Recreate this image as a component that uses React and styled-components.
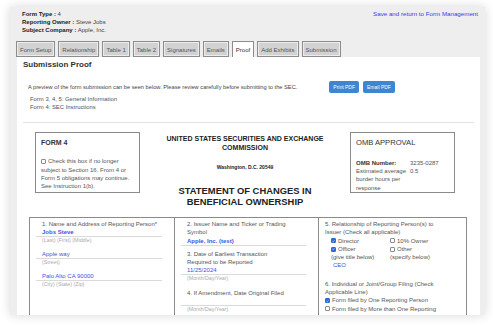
import React from "react";
import styled, { createGlobalStyle } from "styled-components";

const GlobalStyle = createGlobalStyle`
  html, body {
    margin: 0;
    padding: 0;
    background: #ffffff;
  }
  body {
    font-family: "Liberation Sans", Arial, sans-serif;
    color: #333;
  }
`;

const Page = styled.div`
  width: 493px;
  height: 325px;
  padding: 7px 8px 0 10px;
  box-sizing: border-box;
  overflow: hidden;
`;

const Card = styled.div`
  width: 475px;
  height: 308px;
  background: #eeeeee;
  box-shadow: 0 0 10px rgba(0, 0, 0, 0.16);
  display: flex;
  flex-flow: column;
  overflow: hidden;
`;

const Header = styled.div`
  flex-shrink: 0;
  height: 34px;
  display: flex;
  justify-content: space-between;
  padding: 3px 7px 0 12px;
  box-sizing: border-box;
`;

const Meta = styled.div`
  font-size: 6px;
  line-height: 8px;
  color: #444;

  b {
    color: #222;
  }
`;

const BackLink = styled.a`
  font-size: 6.2px;
  line-height: 8px;
  color: #3a3af0;
  text-decoration: none;
`;

const Tabs = styled.div`
  flex-shrink: 0;
  display: flex;
  gap: 3px;
  padding-left: 6px;
  height: 16px;
`;

const Tab = styled.div`
  font-size: 6px;
  color: ${p => (p.active ? "#333" : "#555")};
  padding: 1px 3px 0;
  display: flex;
  align-items: center;
  border: 1px solid #8c8c8c;
  border-bottom: ${p => (p.active ? "none" : "1px solid #8c8c8c")};
  background: ${p => (p.active ? "#ffffff" : "#d2d2d2")};
  box-shadow: ${p => (p.active ? "none" : "inset 0 0 0 1px #ececec")};
  box-sizing: border-box;
`;

const Panel = styled.div`
  flex: 1;
  min-height: 0;
  background: #ffffff;
  margin: 0 5px 0 7px;
  padding: 3px 6px 0;
`;

const Title = styled.div`
  font-size: 8px;
  font-weight: bold;
  color: #333;
  line-height: 10px;
`;

const PreviewRow = styled.div`
  display: flex;
  align-items: center;
  gap: 32px;
  margin-top: 11px;
  padding-left: 5px;
`;

const Note = styled.div`
  font-size: 5.7px;
  color: #444;
  white-space: nowrap;
`;

const Buttons = styled.div`
  display: flex;
  gap: 4px;
`;

const Button = styled.button`
  font-family: inherit;
  font-size: 5px;
  color: #fff;
  background: #3d86d2;
  border: none;
  border-radius: 2px;
  height: 12px;
  padding: 0 4px;
`;

const Links = styled.div`
  margin-top: 3px;
  padding-left: 7px;
  font-size: 5.9px;
  line-height: 7.5px;
  color: #555;
`;

const Separator = styled.div`
  height: 1px;
  background: #e2e2e2;
  margin-top: 11px;
`;

const FormTop = styled.div`
  display: grid;
  grid-template-columns: 105px 1fr 105px;
  align-items: start;
  padding: 0 19px 0 12px;
  margin-top: 9px;
`;

const Box = styled.div`
  border: 1px solid #8a8a8a;
  height: 61px;
  box-sizing: border-box;
  padding: 5px 5px 0;
  font-size: 6px;
  color: #555;
`;

const BoxTitle = styled.div`
  font-size: ${p => (p.bold ? "7px" : "7.6px")};
  font-weight: ${p => (p.bold ? "bold" : "normal")};
  color: #333;
  line-height: 9px;
  margin-bottom: ${p => (p.bold ? "10px" : "12px")};
`;

const BoxText = styled.div`
  line-height: 8.2px;
`;

const OmbGrid = styled.div`
  display: grid;
  grid-template-columns: 54px 1fr;
  line-height: 8.2px;

  b {
    color: #333;
  }
`;

const Center = styled.div`
  text-align: center;
  color: #222;
  font-weight: bold;
`;

const Agency = styled.div`
  font-size: 7px;
  line-height: 8.5px;
  padding: 3px 22px 0;
`;

const City = styled.div`
  font-size: 5px;
  margin-top: 12px;
`;

const Statement = styled.div`
  font-size: 9.4px;
  line-height: 11px;
  margin-top: 15px;
`;

const Table = styled.div`
  display: grid;
  grid-template-columns: 144px 144px 148px;
  margin: 10px 7px 0 6px;
  border: 1px solid #8a8a8a;
  border-bottom: none;
  height: 120px;
  font-size: 6px;
  color: #555;
`;

const Cell = styled.div`
  padding: ${p => (p.wide ? "2px 6px 0 6px" : "2px 12px 0 6px")};
  border-left: ${p => (p.first ? "none" : "1px solid #8a8a8a")};
`;

const Label = styled.div`
  padding-left: ${p => (p.flush ? "0" : "6px")};
  line-height: 8.3px;
`;

const Field = styled.div`
  border-bottom: 1px solid #dadada;
  padding-left: 6px;
  line-height: 8px;
  min-height: ${p => p.tall || 8}px;
  color: #3b55e6;
  font-weight: ${p => (p.bold ? "bold" : "normal")};
`;

const Hint = styled.div`
  padding-left: 6px;
  line-height: 7px;
  font-size: 5.3px;
  color: #aaa;
  margin-bottom: ${p => p.gap || 6}px;
`;

const Spacer = styled.div`
  height: ${p => p.size}px;
`;

const CheckGrid = styled.div`
  display: grid;
  grid-template-columns: 59px 1fr;
  padding-left: 6px;
  line-height: 8.3px;
`;

const CheckRow = styled.div`
  display: ${p => (p.inline ? "inline-flex" : "flex")};
  align-items: center;
  gap: 2px;
  line-height: 8.3px;
  white-space: nowrap;
`;

const Box5 = styled.span`
  width: 5px;
  height: 5px;
  box-sizing: border-box;
  border-radius: 1px;
  border: 1px solid ${p => (p.checked ? "#2a6ad8" : "#8c8c8c")};
  background: ${p => (p.checked ? "#2a6ad8" : "#fff")};
  display: inline-flex;
  align-items: center;
  justify-content: center;
  flex-shrink: 0;
`;

const Check = ({ checked }) => (
  <Box5 checked={checked}>
    {checked && (
      <svg width="4" height="4" viewBox="0 0 10 10">
        <path d="M1.5 5.2 L4 7.6 L8.6 2.4" fill="none" stroke="#fff" strokeWidth="1.8" />
      </svg>
    )}
  </Box5>
);

const Value = styled.div`
  padding-left: 8px;
  color: #3b55e6;
  line-height: 8.3px;
  margin-bottom: 10px;
`;

const tabs = ["Form Setup", "Relationship", "Table 1", "Table 2", "Signatures", "Emails", "Proof", "Add Exhibits", "Submission"];

export default function App() {
  return (
    <>
      <GlobalStyle />
      <Page>
        <Card>
          <Header>
            <Meta>
              <div><b>Form Type :</b> 4</div>
              <div><b>Reporting Owner :</b> Steve Jobs</div>
              <div><b>Subject Company :</b> Apple, Inc.</div>
            </Meta>
            <BackLink href="#">Save and return to Form Management</BackLink>
          </Header>
          <Tabs>
            {tabs.map(t => (
              <Tab key={t} active={t === "Proof"}>{t}</Tab>
            ))}
          </Tabs>
          <Panel>
            <Title>Submission Proof</Title>
            <PreviewRow>
              <Note>A preview of the form submission can be seen below. Please review carefully before submitting to the SEC.</Note>
              <Buttons>
                <Button>Print PDF</Button>
                <Button>Email PDF</Button>
              </Buttons>
            </PreviewRow>
            <Links>
              <div>Form 3, 4, 5: General Information</div>
              <div>Form 4: SEC Instructions</div>
            </Links>
            <Separator />
            <FormTop>
              <Box>
                <BoxTitle bold>FORM 4</BoxTitle>
                <BoxText>
                  <CheckRow inline><Check /> Check this box if no longer</CheckRow>
                  <div>subject to Section 16. From 4 or</div>
                  <div>Form 5 obligations may continue.</div>
                  <div>See Instruction 1(b).</div>
                </BoxText>
              </Box>
              <Center>
                <Agency>UNITED STATES SECURITIES AND EXCHANGE COMMISSION</Agency>
                <City>Washington, D.C. 20549</City>
                <Statement>STATEMENT OF CHANGES IN<br />BENEFICIAL OWNERSHIP</Statement>
              </Center>
              <Box>
                <BoxTitle>OMB APPROVAL</BoxTitle>
                <OmbGrid>
                  <b>OMB Number:</b><span>3235-0287</span>
                  <span>Estimated average</span><span>0.5</span>
                  <span>burder hours per</span><span />
                  <span>response</span><span />
                </OmbGrid>
              </Box>
            </FormTop>
            <Table>
              <Cell first>
                <Label>1. Name and Address of Reporting Person*</Label>
                <Field bold>Jobs Steve</Field>
                <Hint>(Last) (First) (Middle)</Hint>
                <Field>Apple way</Field>
                <Hint>(Street)</Hint>
                <Field>Palo Alto CA 90000</Field>
                <Hint>(City) (State) (Zip)</Hint>
              </Cell>
              <Cell>
                <Label>2. Issuer Name and Ticker or Trading</Label>
                <Label>Symbol</Label>
                <Field bold>Apple, Inc. (test)</Field>
                <Spacer size={4} />
                <Label>3. Date of Earliest Transaction</Label>
                <Label>Required to be Reported</Label>
                <Field>11/25/2024</Field>
                <Hint gap={7}>(Month/Day/Year)</Hint>
                <Label>4. If Amendment, Date Original Filed</Label>
                <Field tall={8} />
                <Hint>(Month/Day/Year)</Hint>
              </Cell>
              <Cell wide>
                <Label flush>5. Relationship of Reporting Person(s) to</Label>
                <Label flush>Issuer (Check all applicable)</Label>
                <CheckGrid>
                  <CheckRow><Check checked /> Director</CheckRow>
                  <CheckRow><Check /> 10% Owner</CheckRow>
                  <CheckRow><Check checked /> Officer</CheckRow>
                  <CheckRow><Check /> Other</CheckRow>
                  <span>(give title below)</span>
                  <span>(specify below)</span>
                </CheckGrid>
                <Value>CEO</Value>
                <Label flush>6. Individual or Joint/Group Filing (Check</Label>
                <Label flush>Applicable Line)</Label>
                <CheckRow><Check checked /> Form filed by One Reporting Person</CheckRow>
                <CheckRow><Check /> Form filed by More than One Reporting</CheckRow>
                <Label>Person</Label>
              </Cell>
            </Table>
          </Panel>
        </Card>
      </Page>
    </>
  );
}
